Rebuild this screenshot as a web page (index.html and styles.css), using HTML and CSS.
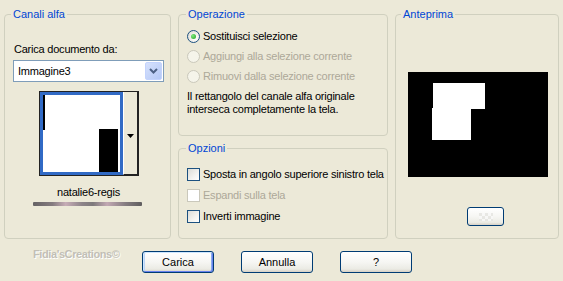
FILE: index.html
```html
<!DOCTYPE html>
<html>
<head>
<meta charset="utf-8">
<link rel="stylesheet" href="styles.css">
</head>
<body>
<div class="dialog">
  <div class="groups">
    <fieldset class="group g-source">
      <legend>Canali alfa</legend>
      <div class="source-label">Carica documento da:</div>
      <div class="combo">
        <span class="combo-text">Immagine3</span>
        <span class="combo-btn">
          <svg width="9" height="6" viewBox="0 0 9 6"><path d="M1 1 L4.5 4.5 L8 1" fill="none" stroke="#4d6185" stroke-width="2"/></svg>
        </span>
      </div>
      <div class="thumb">
        <div class="thumb-img">
          <div class="thumb-canvas">
            <span class="t-bar"></span>
            <span class="t-rect"></span>
          </div>
        </div>
        <div class="thumb-drop">
          <svg width="7" height="4" viewBox="0 0 7 4"><path d="M0 0 H7 L3.5 4 Z" fill="#000"/></svg>
        </div>
      </div>
      <div class="thumb-name">natalie6-regis</div>
      <div class="thumb-bar"></div>
    </fieldset>

    <div class="middle">
      <fieldset class="group g-op">
        <legend>Operazione</legend>
        <div class="opt-list">
          <div class="opt"><span class="radio checked"></span><span>Sostituisci selezione</span></div>
          <div class="opt disabled"><span class="radio"></span><span>Aggiungi alla selezione corrente</span></div>
          <div class="opt disabled"><span class="radio"></span><span>Rimuovi dalla selezione corrente</span></div>
        </div>
        <p class="desc">Il rettangolo del canale alfa originale<br>interseca completamente la tela.</p>
      </fieldset>
      <fieldset class="group g-opts">
        <legend>Opzioni</legend>
        <div class="chk-list">
          <div class="chk-row"><span class="chk"></span><span>Sposta in angolo superiore sinistro tela</span></div>
          <div class="chk-row disabled"><span class="chk"></span><span>Espandi sulla tela</span></div>
          <div class="chk-row"><span class="chk"></span><span>Inverti immagine</span></div>
        </div>
      </fieldset>
    </div>

    <fieldset class="group g-preview">
      <legend>Anteprima</legend>
      <div class="preview">
        <span class="p-top"></span>
        <span class="p-low"></span>
      </div>
      <div class="preview-btn-row"><button class="btn small"><span class="checker"></span></button></div>
    </fieldset>
  </div>

  <div class="footer">
    <span class="watermark">Fidia'sCreations©</span>
    <button class="btn default">Carica</button>
    <button class="btn">Annulla</button>
    <button class="btn">?</button>
  </div>
</div>
</body>
</html>
```
FILE: styles.css
```css
html, body {
  margin: 0;
  padding: 0;
  background: #ece9d8;
}
body {
  font-family: "Liberation Sans", Arial, sans-serif;
  font-size: 11px;
  line-height: 13px;
  letter-spacing: -0.22px;
  white-space: nowrap;
  color: #000;
}
.dialog {
  width: 563px;
  height: 281px;
  padding: 8px 0 0 4px;
  box-sizing: border-box;
}
.groups {
  display: grid;
  grid-template-columns: 167px 210px 164px;
  column-gap: 7px;
  align-items: stretch;
}
.middle {
  display: flex;
  flex-direction: column;
  gap: 6px;
}
.group {
  margin: 0;
  padding: 0;
  min-width: 0;
  border: 1px solid #d0d0bf;
  border-radius: 4px;
  box-sizing: border-box;
}
.group legend {
  margin-left: 6px;
  padding: 0 2px;
  color: #0046d5;
  font-size: 11px;
  line-height: 13px;
  letter-spacing: 0;
}
.g-op legend, .g-opts legend { margin-left: 7px; }
.g-preview legend { margin-left: 5px; }

/* source group */
.source-label {
  margin: 22px 0 0 9px;
}
.combo {
  margin: 4px 0 0 8px;
  width: 151px;
  height: 22px;
  box-sizing: border-box;
  border: 1px solid #7f9db9;
  background: #fff;
  display: flex;
  align-items: center;
  justify-content: space-between;
  padding: 1px;
}
.combo-text {
  padding-left: 3px;
}
.combo-btn {
  width: 17px;
  height: 18px;
  box-sizing: border-box;
  border-radius: 2px;
  border: 1px solid #c3d3fd;
  background: linear-gradient(135deg, #d6e1fc, #b4c8f6);
  display: flex;
  align-items: center;
  justify-content: center;
}
.thumb {
  margin: 9px 0 0 34px;
  width: 100px;
  height: 85px;
  box-sizing: border-box;
  border: 1px solid #222;
  display: flex;
  background: #ece9d8;
}
.thumb-img {
  width: 83px;
  height: 83px;
  box-sizing: border-box;
  border: 3px solid #316ac5;
  background: #fff;
}
.thumb-canvas {
  position: relative;
  width: 100%;
  height: 100%;
}
.t-bar {
  position: absolute;
  left: 0;
  top: 0;
  width: 2px;
  height: 35px;
  background: #000;
}
.t-rect {
  position: absolute;
  left: 56px;
  top: 34px;
  width: 19px;
  height: 43px;
  background: #000;
}
.thumb-drop {
  flex: 1;
  border-left: 1px solid #fff;
  border-right: 1px solid #222;
  border-bottom: 1px solid #222;
  display: flex;
  justify-content: center;
  padding-top: 42px;
  box-sizing: border-box;
}
.thumb-drop svg { display: block; }
.thumb-name {
  margin-top: 10px;
  text-align: center;
  padding-left: 2px;
}
.thumb-bar {
  margin: 3px 0 0 28px;
  width: 109px;
  height: 4px;
  border-radius: 1px;
  background: linear-gradient(90deg, #656264 0%, #857c80 18%, #c7adb7 30%, #8d8489 45%, #7e7a7c 55%, #c2a8b3 68%, #847c80 85%, #5f5d5e 100%);
}

/* operation group */
.opt-list {
  padding: 5px 0 0 8px;
}
.opt {
  height: 20px;
  display: flex;
  align-items: center;
  gap: 3px;
}
.opt.disabled, .chk-row.disabled { color: #aca899; }
.radio {
  width: 13px;
  height: 13px;
  box-sizing: border-box;
  border-radius: 50%;
  border: 1px solid #1c5180;
  background: radial-gradient(circle at 65% 65%, #fff 0%, #f3f2ee 40%, #d6d4cb 100%);
  display: flex;
  align-items: center;
  justify-content: center;
}
.radio.checked::after {
  content: "";
  width: 5px;
  height: 5px;
  border-radius: 50%;
  background: radial-gradient(circle at 35% 35%, #7ee87e, #21a121);
}
.opt.disabled .radio {
  border-color: #cac8bb;
  background: #f5f4ea;
}
.desc {
  margin: 4px 0 0 8px;
  padding-bottom: 19px;
}

/* options group */
.chk-list {
  padding: 9px 0 11px 8px;
}
.chk-row {
  height: 21px;
  display: flex;
  align-items: center;
  gap: 3px;
}
.chk {
  width: 13px;
  height: 13px;
  box-sizing: border-box;
  border: 1px solid #1c5180;
  background: linear-gradient(135deg, #dcdcd7 0%, #f3f3f0 60%, #fff 100%);
}
.chk-row.disabled .chk {
  border-color: #cac8bb;
  background: #fff;
}

/* preview group */
.preview {
  position: relative;
  margin: 51px 0 0 12px;
  width: 140px;
  height: 105px;
  background: #000;
}
.p-top {
  position: absolute;
  left: 25px;
  top: 11px;
  width: 52px;
  height: 26px;
  background: #fff;
}
.p-low {
  position: absolute;
  left: 24px;
  top: 36px;
  width: 39px;
  height: 32px;
  background: #fff;
}
.preview-btn-row {
  padding: 30px 0 0 71px;
}

/* buttons */
.btn {
  font-family: "Liberation Sans", Arial, sans-serif;
  font-size: 11px;
  color: #000;
  width: 72px;
  height: 22px;
  box-sizing: border-box;
  border: 1px solid #003c74;
  border-radius: 3px;
  background: linear-gradient(180deg, #ffffff 0%, #f6f6f3 50%, #ebebe4 85%, #d6d0c5 100%);
  padding: 0;
  margin: 0;
}
.btn.default {
  box-shadow: inset 1px 1px 0 #cee7ff, inset -1px -1px 0 #6982ee, inset 2px 0 0 #bcd4f6, inset -2px 0 0 #89adf0;
}
.btn.small {
  width: 37px;
  height: 19px;
  display: flex;
  align-items: center;
  justify-content: center;
}
.checker {
  width: 14px;
  height: 8px;
  background: repeating-conic-gradient(#f8f8f8 0 25%, #e4e4e0 0 50%) 0 0 / 6px 6px;
  opacity: 0.8;
}
.footer {
  display: flex;
  align-items: flex-start;
  margin-top: 12px;
  padding-left: 29px;
}
.footer .btn + .btn { margin-left: 27px; }
.watermark {
  width: 109px;
  margin-top: -3px;
  font-weight: bold;
  color: #c2bfb6;
  text-shadow: 1px 1px 0 #ffffff;
  letter-spacing: -0.4px;
}
```
